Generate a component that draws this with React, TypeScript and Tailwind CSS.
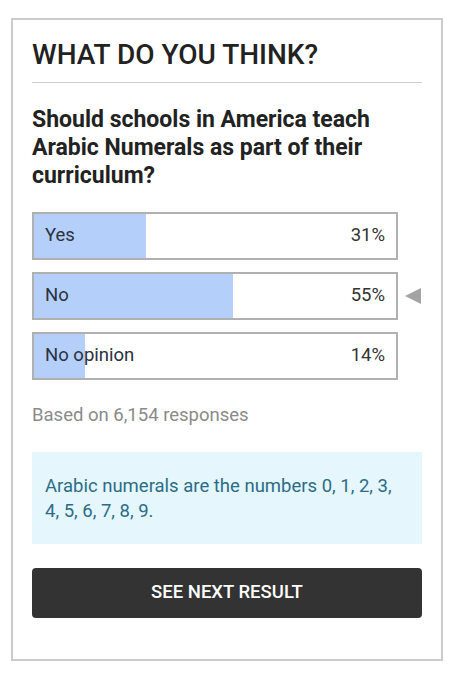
import React from 'react'

type Choice = { label: string; pct: number; mine?: boolean }

const choices: Choice[] = [
    { label: 'Yes', pct: 31 },
    { label: 'No', pct: 55, mine: true },
    { label: 'No opinion', pct: 14 },
]

function ResultBar({ choice }: { choice: Choice }) {
    return (
        <div className="flex items-center">
            <div className="relative w-[366px] h-[48px] border-2 border-[#b0b0b0] bg-white">
                <div className="absolute inset-y-0 left-0 bg-[#b3cffa]" style={{ width: `${choice.pct}%` }} />
                <div className="relative flex h-full items-center justify-between pl-[11px] pr-[11px] text-[18.5px] text-[#2a3140]">
                    <span>{choice.label}</span>
                    <span className="text-[#333]">{choice.pct}%</span>
                </div>
            </div>
            {choice.mine && (
                <svg width="18" height="18" viewBox="0 0 18 18" className="ml-[6px]">
                    <polygon points="17,1 17,17 1,9" fill="#a3a3a3" />
                </svg>
            )}
        </div>
    )
}

export default function App() {
    return (
        <div className="min-h-[674px] bg-white pt-[18px] pl-[11px] font-['Roboto',sans-serif]">
            <div className="w-[432px] h-[643px] border-2 border-[#cbcbcb] pt-[18px] pl-[19px] pr-[19px]">
                <h2 className="text-[28px] leading-[34px] font-medium text-[#222]">WHAT DO YOU THINK?</h2>
                <div className="mt-[10px] h-px bg-[#cfcfcf]" />

                <p className="mt-[23px] text-[23px] leading-[28px] font-bold text-[#222] pr-[30px]">
                    Should schools in America teach Arabic Numerals as part of their curriculum?
                </p>

                <div className="mt-[22px] flex flex-col gap-3">
                    {choices.map((c) => (
                        <ResultBar key={c.label} choice={c} />
                    ))}
                </div>

                <p className="mt-[23px] text-[18.5px] leading-[24px] text-[#8a8a8a]">Based on 6,154 responses</p>

                <div className="mt-[25px] bg-[#e5f6fd] pt-[22px] pb-[20px] pl-[13px] pr-[16px] text-[18.5px] leading-[25px] text-[#2b6d88]">
                    Arabic numerals are the numbers 0, 1, 2, 3, 4, 5, 6, 7, 8, 9.
                </div>

                <button className="mt-[24px] w-full h-[50px] rounded-[4px] bg-[#333333] text-white text-[18.5px] font-medium">
                    SEE NEXT RESULT
                </button>
            </div>
        </div>
    )
}
